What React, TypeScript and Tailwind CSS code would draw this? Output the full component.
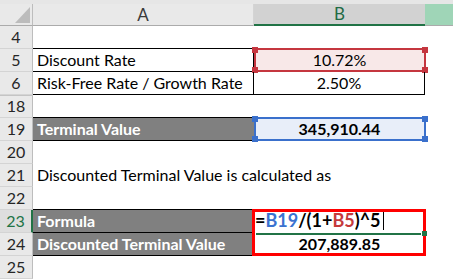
import React from "react";

type RowProps = {
  n: string;
  active?: boolean;
  hidTop?: boolean;
  a?: React.ReactNode;
  b?: React.ReactNode;
  aCls?: string;
  bCls?: string;
  bOver?: React.ReactNode;
};

function Row({ n, active, hidTop, a, b, aCls = "", bCls = "", bOver }: RowProps) {
  return (
    <div className="flex h-[23px]">
      <div
        className={`w-[33px] shrink-0 flex items-end justify-center pb-[1px] border-b border-b-[#d4d4d4] text-[16px] leading-[20px] ${
          active
            ? "bg-[#dedede] text-[#217346] border-r-2 border-r-[#217346]"
            : "bg-[#e9e9e9] text-[#262626] border-r border-r-[#bdbdbd]"
        } ${hidTop ? "border-t border-t-[#c4c4c4]" : ""}`}
      >
        {n}
      </div>
      <div className={`w-[221px] shrink-0 relative flex items-end px-[4px] pb-[1px] whitespace-nowrap border-b ${aCls}`}>
        {a}
      </div>
      <div className={`w-[171px] shrink-0 relative flex items-end justify-center pb-[1px] whitespace-nowrap border-b ${bCls}`}>
        {b}
        {bOver}
      </div>
      <div className="flex-1" />
    </div>
  );
}

function Highlight({ line, dot }: { line: string; dot: string }) {
  return (
    <div className={`pointer-events-none absolute left-0 top-[-1px] right-[-1px] bottom-[-1px] border-2 ${line}`}>
      <span className={`absolute -left-[4px] -top-[3px] w-[6px] h-[6px] ${dot}`} />
      <span className={`absolute -right-[4px] -top-[3px] w-[6px] h-[6px] ${dot}`} />
      <span className={`absolute -left-[4px] -bottom-[3px] w-[6px] h-[6px] ${dot}`} />
      <span className={`absolute -right-[4px] -bottom-[3px] w-[6px] h-[6px] ${dot}`} />
    </div>
  );
}

export default function App() {
  const gray = "bg-[#808080] text-white font-bold";
  return (
    <div className="w-[453px] h-[280px] overflow-hidden bg-white text-[16px] leading-[20px] text-black font-['Lato','Liberation_Sans',sans-serif]">
      <div className="h-[4px] bg-[#e6e6e6]" />
      {/* column headers */}
      <div className="flex h-[22px]">
        <div className="w-[33px] shrink-0 relative bg-[#e9e9e9] border-r border-r-[#bdbdbd] border-b border-b-[#ababab]">
          <svg className="absolute left-[15px] top-[3px]" width="15" height="16" viewBox="0 0 15 16">
            <polygon points="0,16 15,16 15,0" fill="#bcbcbc" />
          </svg>
        </div>
        <div className="w-[221px] shrink-0 flex items-center justify-center bg-[#e9e9e9] border-r border-r-[#d4d4d4] border-b border-b-[#ababab] text-[17px] text-[#3a3a3a]">
          A
        </div>
        <div className="w-[171px] shrink-0 flex items-center justify-center bg-[#d2d2d2] border-b-2 border-b-[#217346] text-[17px] text-[#1f6b45]">
          B
        </div>
        <div className="flex-1 bg-[#9fd5b7] border-b border-b-[#ababab]" />
      </div>

      <Row n="4" aCls="border-b-black" bCls="border-b-black" />
      <Row
        n="5"
        a="Discount Rate"
        aCls="border-b-black border-r border-r-black"
        b="10.72%"
        bCls="border-b-black bg-[#f8e8e8]"
        bOver={<Highlight line="border-[#c5363f]" dot="bg-[#c5363f]" />}
      />
      <Row
        n="6"
        a="Risk-Free Rate / Growth Rate"
        aCls="border-b-black border-r border-r-black"
        b="2.50%"
        bCls="border-b-black border-r border-r-black"
      />
      <Row n="18" hidTop aCls="border-b-black" bCls="border-b-black" />
      <Row
        n="19"
        a="Terminal Value"
        aCls={`${gray} border-b-black`}
        b={<span className="font-bold">345,910.44</span>}
        bCls="border-b-black bg-[#e8eef9]"
        bOver={<Highlight line="border-[#3a70cc]" dot="bg-[#3a70cc]" />}
      />
      <Row n="20" aCls="border-b-transparent" bCls="border-b-transparent" />
      <Row
        n="21"
        a="Discounted Terminal Value is calculated as"
        aCls="border-b-transparent"
        bCls="border-b-transparent"
      />
      <Row n="22" aCls="border-b-black" bCls="border-b-black" />

      <div className="relative">
        <Row
          n="23"
          active
          a="Formula"
          aCls={`${gray} border-b-black`}
          b={
            <span className="w-full pl-[1px] font-bold text-[18px] leading-[21px] flex items-end">
              <span>=</span>
              <span className="text-[#3b72d0]">B19</span>
              <span>/(1+</span>
              <span className="text-[#c53a3c]">B5</span>
              <span>)^5</span>
              <span className="inline-block w-px h-[20px] bg-black ml-[2px] mb-[1px]" />
            </span>
          }
          bCls="border-b-transparent"
        />
        <Row
          n="24"
          a="Discounted Terminal Value"
          aCls={`${gray} border-b-black`}
          b={<span className="font-bold">207,889.85</span>}
          bCls="border-b-black"
        />
        <div className="pointer-events-none absolute left-[252px] top-[-1px] w-[174px] h-[47px] border-[3px] border-[#ff0000]" />
        <div className="pointer-events-none absolute left-[256px] top-[23px] w-[165px] h-[2px] bg-[#217346]" />
        <div className="pointer-events-none absolute left-[422px] top-[21px] w-[5px] h-[5px] bg-[#217346]" />
      </div>
      <Row n="25" aCls="border-b-transparent" bCls="border-b-transparent" />
    </div>
  );
}
